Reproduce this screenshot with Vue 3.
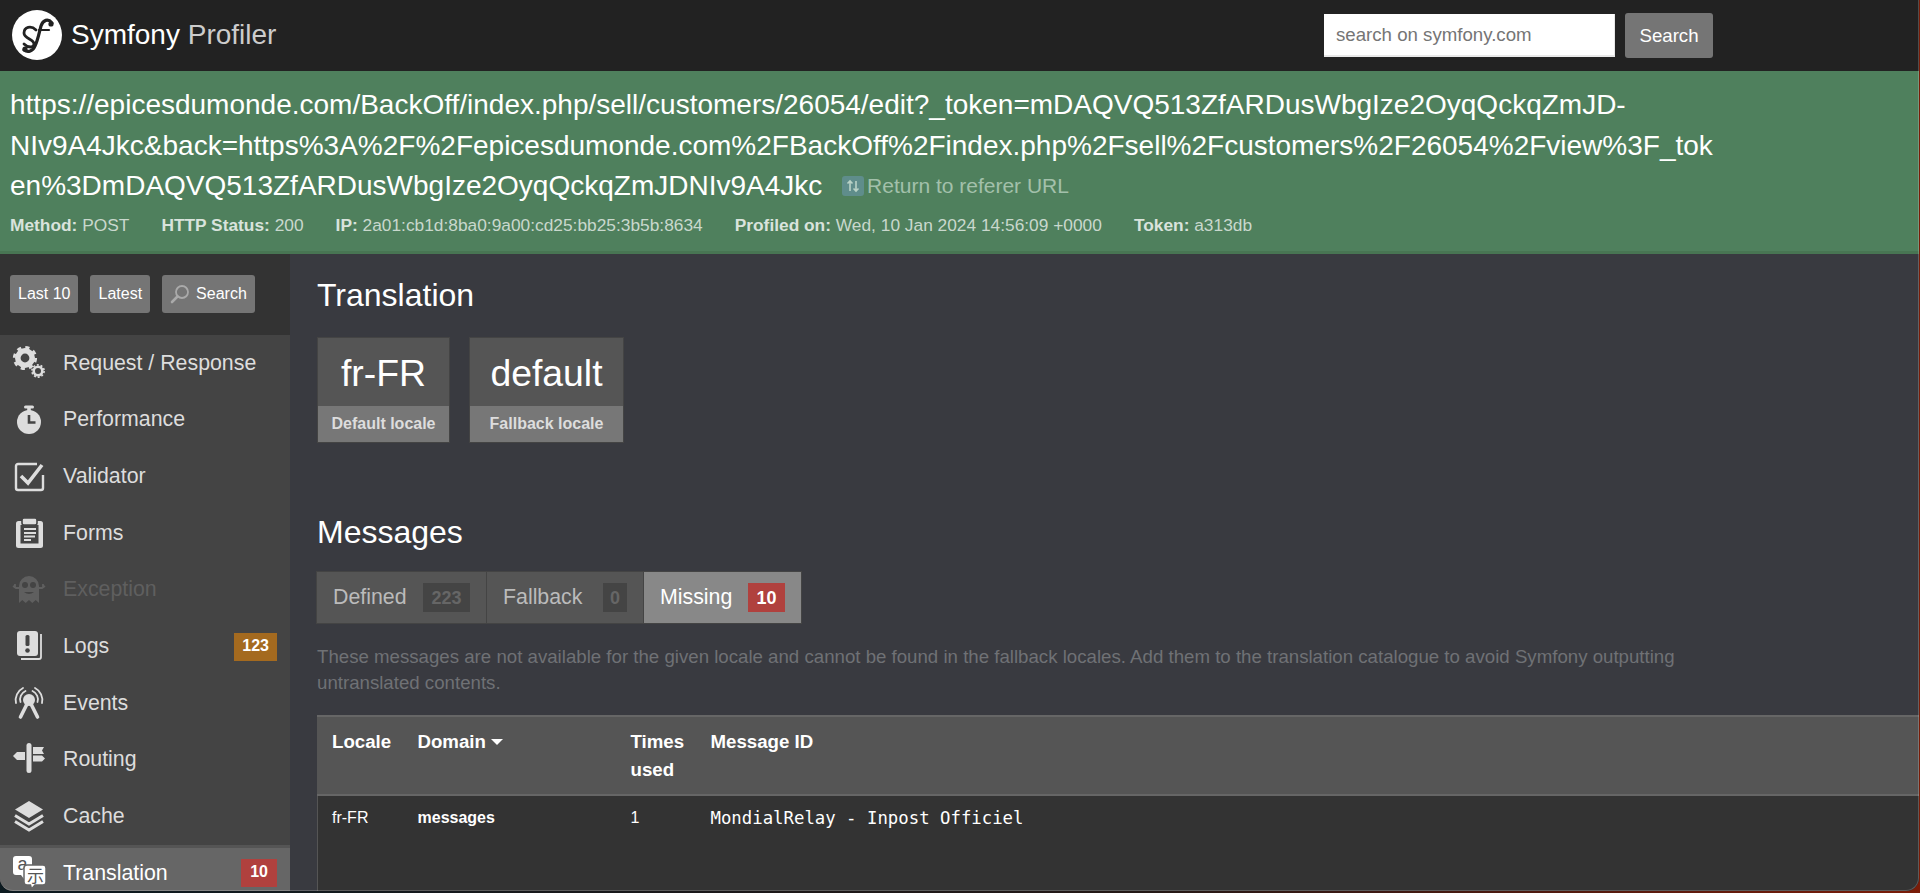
<script setup>
const meta = [
  ['Method:', 'POST'],
  ['HTTP Status:', '200'],
  ['IP:', '2a01:cb1d:8ba0:9a00:cd25:bb25:3b5b:8634'],
  ['Profiled on:', 'Wed, 10 Jan 2024 14:56:09 +0000'],
  ['Token:', 'a313db'],
]
const nav = [
  { id: 'gears', label: 'Request / Response' },
  { id: 'timer', label: 'Performance' },
  { id: 'check', label: 'Validator' },
  { id: 'forms', label: 'Forms' },
  { id: 'ghost', label: 'Exception', disabled: true },
  { id: 'logs', label: 'Logs', badge: '123', tone: 'warn' },
  { id: 'events', label: 'Events' },
  { id: 'routing', label: 'Routing' },
  { id: 'cache', label: 'Cache' },
  { id: 'trans', label: 'Translation', badge: '10', tone: 'err', active: true },
]
</script>

<template>
  <div class="window">
    <header class="top">
      <div class="brand">
        <svg class="logo" viewBox="0 0 50 50" width="50" height="50">
          <circle cx="25" cy="25" r="25" fill="#fff" />
          <g fill="none" stroke="#222" stroke-linecap="round">
            <path d="M40 13C36 8 31 10 29 16C27 23 26 30 23 36C21 41 16 43 12 40" stroke-width="3.200" />
            <path d="M24 20C19 15 12 17 12 23C12 29 22 29 22 34C22 38 16 38 12 34" stroke-width="2.800" />
            <path d="M27 20H37" stroke-width="2.200" />
          </g>
          <circle cx="39" cy="14" r="2.600" fill="#222" />
          <circle cx="13" cy="39" r="2.600" fill="#222" />
        </svg>
        <span class="name">Symfony <span class="muted">Profiler</span></span>
      </div>
      <form class="site-search" @submit.prevent>
        <input type="search" placeholder="search on symfony.com" />
        <button class="btn big" type="submit">Search</button>
      </form>
    </header>

    <section class="summary">
      <div class="url">
        https://epicesdumonde.com/BackOff/index.php/sell/customers/26054/edit?_token=mDAQVQ513ZfARDusWbgIze2OyqQckqZmJD-NIv9A4Jkc&amp;back=https%3A%2F%2Fepicesdumonde.com%2FBackOff%2Findex.php%2Fsell%2Fcustomers%2F26054%2Fview%3F_token%3DmDAQVQ513ZfARDusWbgIze2OyqQckqZmJDNIv9A4Jkc
        <a class="return">
          <svg viewBox="0 0 22 20" width="22" height="20">
            <rect width="22" height="20" rx="3" fill="#5f8d8b" />
            <path d="M8 5v10M5.500 7.500 8 5l2.500 2.500M14 15V5M11.500 12.500 14 15l2.500-2.500" fill="none" stroke="#b9d2c6" stroke-width="1.600" />
          </svg>
          Return to referer URL
        </a>
      </div>
      <dl class="meta">
        <div v-for="m in meta" :key="m[0]"><b>{{ m[0] }}</b> {{ m[1] }}</div>
      </dl>
    </section>

    <div class="body">
      <aside class="side">
        <div class="tools">
          <button class="btn">Last 10</button>
          <button class="btn">Latest</button>
          <button class="btn with-icon">
            <svg viewBox="0 0 20 20" width="20" height="20">
              <circle cx="12" cy="8" r="6" fill="none" stroke="#aaa" stroke-width="1.800" />
              <path d="M7.500 12.500 2 18" stroke="#aaa" stroke-width="2.600" stroke-linecap="round" />
            </svg>
            Search
          </button>
        </div>
        <nav class="nav">
          <a v-for="n in nav" :key="n.id" class="item" :class="{ disabled: n.disabled, active: n.active }">
            <svg class="ico" viewBox="0 0 34 34" width="34" height="34">
              <template v-if="n.id === 'gears'">
                <g fill="none" stroke="currentColor">
                  <circle cx="13" cy="12" r="7.200" stroke-width="5.600" />
                  <circle cx="13" cy="12" r="10.700" stroke-width="2.800" stroke-dasharray="4.200 4.200" />
                  <circle cx="26" cy="25" r="4.300" stroke-width="2.600" />
                  <circle cx="26" cy="25" r="6.100" stroke-width="1.600" stroke-dasharray="2 1.830" />
                </g>
              </template>
              <template v-else-if="n.id === 'timer'">
                <circle cx="17" cy="19" r="12" fill="currentColor" />
                <rect x="12" y="2.500" width="10" height="3" rx="1.500" fill="currentColor" />
                <rect x="15.200" y="5" width="3.600" height="4" fill="currentColor" />
                <path d="M17 12v7.500h6.500" fill="none" stroke="#444" stroke-width="2.600" />
              </template>
              <template v-else-if="n.id === 'check'">
                <path d="M25 4H6a2 2 0 0 0-2 2v22a2 2 0 0 0 2 2h23a2 2 0 0 0 2-2V15" fill="none" stroke="currentColor" stroke-width="2.400" />
                <path d="M9 16l7 7L30 5" fill="none" stroke="currentColor" stroke-width="3.600" />
              </template>
              <template v-else-if="n.id === 'forms'">
                <rect x="4" y="5" width="27" height="27" rx="2.500" fill="currentColor" />
                <rect x="8.500" y="9" width="18" height="18.500" fill="#444" />
                <path d="M12 13h12M12 17h12M12 20.500h11M12 24h7" stroke="currentColor" stroke-width="2" />
                <rect x="10" y="2" width="15" height="7" rx="2" fill="currentColor" stroke="#444" stroke-width="1.600" />
              </template>
              <template v-else-if="n.id === 'ghost'">
                <path d="M7 30V13a10 10 0 0 1 20 0v17l-3.300-3-3.400 3-3.300-3-3.300 3-3.400-3z" fill="currentColor" />
                <path d="M1 13l3 2h4M33 13l-3 2h-4M3 11v4M31 11v4" stroke="currentColor" stroke-width="1.800" fill="none" />
                <circle cx="13" cy="12" r="3" fill="#444" /><circle cx="21" cy="12" r="3" fill="#444" />
                <path d="M12 19q5 4 10 0z" fill="#444" />
              </template>
              <template v-else-if="n.id === 'logs'">
                <path d="M29 4v23a2 2 0 0 1-2 2H9" fill="none" stroke="currentColor" stroke-width="1.800" />
                <rect x="5" y="1" width="21" height="25" rx="3" fill="currentColor" />
                <rect x="13.500" y="5" width="4" height="11" rx="1.500" fill="#444" />
                <circle cx="15.500" cy="20.500" r="2.300" fill="#444" />
              </template>
              <template v-else-if="n.id === 'events'">
                <circle cx="17" cy="14" r="6" fill="currentColor" />
                <path d="M15 18 8.500 31M19 18l6.500 13" stroke="currentColor" stroke-width="3.600" stroke-linecap="round" />
                <g fill="none" stroke="currentColor" stroke-width="1.800" stroke-linecap="round">
                  <path d="M8.500 16a9 9 0 0 1 5-11M25.500 16a9 9 0 0 0-5-11" />
                  <path d="M4 17a13.500 13.500 0 0 1 7-15M30 17a13.500 13.500 0 0 0-7-15" />
                </g>
              </template>
              <template v-else-if="n.id === 'routing'">
                <rect x="14.500" y="0" width="5" height="30" rx="2.500" fill="currentColor" />
                <path d="M13 9H5L1 13l4 4h8zM21 4h11l-2 3.500 2 3.500H21zM21 12.500h9l3 3-3 3h-9z" fill="currentColor" />
              </template>
              <template v-else-if="n.id === 'cache'">
                <path d="M17 1 31 9.500 17 18 3 9.500z" fill="currentColor" />
                <path d="M3 15.500l14 8.500 14-8.500M3 21.500 17 30l14-8.500" fill="none" stroke="currentColor" stroke-width="3" />
              </template>
              <template v-else>
                <path d="M4 0h13a3 3 0 0 1 3 3v13a3 3 0 0 1-3 3h-3l-2 4-3-4H4a3 3 0 0 1-3-3V3a3 3 0 0 1 3-3z" fill="#fff" />
                <text x="5.500" y="14" class="gl a">a</text>
                <path d="M15 9h16a3 3 0 0 1 3 3v14a3 3 0 0 1-3 3h-8l-3.500 4-1-4H15a3 3 0 0 1-3-3V12a3 3 0 0 1 3-3z" fill="#fff" stroke="#666" stroke-width="1.500" />
                <text x="15" y="26" class="gl z">示</text>
              </template>
            </svg>
            <span class="label">{{ n.label }}</span>
            <span v-if="n.badge" class="badge" :class="n.tone">{{ n.badge }}</span>
          </a>
        </nav>
      </aside>

      <main class="main">
        <h2>Translation</h2>
        <div class="metrics">
          <div class="metric">
            <span class="value">fr-FR</span>
            <span class="cap">Default locale</span>
          </div>
          <div class="metric">
            <span class="value">default</span>
            <span class="cap">Fallback locale</span>
          </div>
        </div>

        <h2 class="second">Messages</h2>
        <div class="tabs">
          <div class="tab">Defined <span class="count">223</span></div>
          <div class="tab">Fallback <span class="count">0</span></div>
          <div class="tab on">Missing <span class="count err">10</span></div>
        </div>
        <p class="help">These messages are not available for the given locale and cannot be found in the fallback locales. Add them to the translation catalogue to avoid Symfony outputting untranslated contents.</p>

        <table class="tbl">
          <colgroup>
            <col class="c1" /><col class="c2" /><col class="c3" /><col />
          </colgroup>
          <thead>
            <tr>
              <th>Locale</th>
              <th>Domain <i class="caret"></i></th>
              <th>Times used</th>
              <th>Message ID</th>
            </tr>
          </thead>
          <tbody>
            <tr>
              <td>fr-FR</td>
              <td><strong>messages</strong></td>
              <td>1</td>
              <td class="mono">MondialRelay - Inpost Officiel</td>
            </tr>
          </tbody>
        </table>
      </main>
    </div>
  </div>
</template>

<style>
html, body {
  margin: 0;
  height: 893px;
  overflow: hidden;
  background: linear-gradient(90deg, #0c1a20 0%, #241816 60%, #7a1c08 100%);
}
</style>

<style scoped>
.window {
  position: relative;
  height: 891px;
  width: 1919px;
  display: flex;
  flex-direction: column;
  overflow: hidden;
  border-radius: 0 0 13px 13px;
  background: #393a40;
  color: #fff;
  font-family: "Liberation Sans", Arial, sans-serif;
}
.window::after {
  content: "";
  position: absolute;
  inset: 0;
  border: 1px solid rgba(255, 255, 255, .2);
  border-top: 0;
  border-left: 0;
  border-radius: 0 0 13px 13px;
  pointer-events: none;
}

.top {
  height: 71px;
  flex: none;
  display: flex;
  align-items: center;
  justify-content: space-between;
  background: #222;
  padding: 0 206px 0 12px;
}
.brand { display: flex; align-items: center; gap: 9px; margin-top: -2px; }
.logo { display: block; }
.name { font-size: 28px; }
.muted { color: #ccc; }
.site-search { display: flex; align-items: center; gap: 10px; }
.site-search input {
  width: 291px;
  height: 43px;
  box-sizing: border-box;
  border: 1px solid #e8e8e8;
  border-width: 0 1px 2px 0;
  background: #fff;
  padding: 0 12px;
  font: 18.670px "Liberation Sans", Arial, sans-serif;
  border-radius: 0;
  outline: 0;
}
.site-search input::placeholder { color: #757575; opacity: 1; }

.btn {
  display: inline-flex;
  align-items: center;
  height: 38px;
  box-sizing: border-box;
  padding: 0 8px;
  border: 0;
  border-radius: 3px;
  background: #757575;
  color: #fff;
  font: 16px "Liberation Sans", Arial, sans-serif;
}
.btn.big { height: 45px; width: 88px; justify-content: center; font-size: 18.670px; padding: 0; }
.btn.with-icon { gap: 6px; }

.summary {
  flex: none;
  height: 183px;
  box-sizing: border-box;
  background: #4f805d;
  border-bottom: 3px solid #487553;
  padding: 14px 0 0 10px;
}
.url {
  width: 1712px;
  font-size: 28px;
  line-height: 40.500px;
  overflow-wrap: anywhere;
}
.return {
  display: inline-flex;
  align-items: center;
  gap: 3px;
  margin-left: 12px;
  font-size: 21px;
  line-height: 30px;
  color: #a3c0ab;
  vertical-align: -1px;
}
.meta {
  display: flex;
  gap: 32px;
  margin: 3px 0 0;
  font-size: 17.330px;
  line-height: 30px;
  color: #c9d8cd;
}
.meta b { color: #d9e3dc; }

.body { flex: 1; min-height: 0; display: flex; }
.side { width: 290px; flex: none; background: #444; display: flex; flex-direction: column; overflow: hidden; }
.tools {
  height: 81px;
  flex: none;
  box-sizing: border-box;
  background: #333;
  display: flex;
  align-items: flex-start;
  gap: 12px;
  padding: 21px 9px 0 10px;
}
.nav { flex: none; }
.item {
  height: 56.670px;
  box-sizing: border-box;
  display: flex;
  align-items: center;
  padding-right: 13px;
  color: #ddd;
  font-size: 21.330px;
}
.ico { margin: 0 5px 0 12px; flex: none; color: #ddd; overflow: visible; }
.label { margin-left: 12px; flex: 1; }
.item.disabled, .item.disabled .ico { color: #5f5f5f; }
.item.active {
  background: #666;
  border-top: 3px solid #555;
  padding-bottom: 3px;
  color: #fff;
}
.badge {
  height: 28px;
  line-height: 26px;
  padding: 0 8px;
  font-size: 16px;
  font-weight: 700;
  color: #fff;
}
.badge.warn { background: #a46a1f; }
.badge.err { background: #b0413e; padding: 0 9px; }
.gl { font-family: "Liberation Sans", "Noto Sans CJK SC", sans-serif; fill: #555; }
.gl.a { font-size: 18px; }
.gl.z { font-family: "Noto Sans CJK SC", sans-serif; font-size: 17px; }

.main { flex: 1; min-width: 0; padding: 21px 0 0 27px; overflow: hidden; }
h2 { margin: 0; font-size: 32px; line-height: 40px; font-weight: 400; }
.second { margin-top: 69px; }
.metrics { display: flex; gap: 19px; margin-top: 22px; }
.metric {
  display: flex;
  flex-direction: column;
  width: 133px;
  border: 1px solid #444;
  box-sizing: border-box;
  text-align: center;
}
.metric + .metric { width: 155px; }
.value { height: 68px; line-height: 70px; background: #555; font-size: 37.330px; }
.cap { height: 36px; line-height: 36px; background: #777; color: #ddd; font-size: 16px; font-weight: 700; }

.tabs { display: flex; margin-top: 19px; margin-left: -1px; }
.tab {
  height: 53px;
  box-sizing: border-box;
  display: flex;
  align-items: center;
  justify-content: space-between;
  padding: 0 16px 0 16px;
  background: #555;
  border: 1px solid #444;
  border-right: 0;
  color: #bbb;
  font-size: 21.330px;
  width: 170px;
}
.tab + .tab { width: 157px; }
.tab.on { width: 159px; background: #888; color: #fff; padding-right: 16px; border-right: 1px solid #444; }
.count {
  height: 29px;
  line-height: 30px;
  padding: 0 7px;
  background: #444;
  color: #666;
  font-size: 18px;
  font-weight: 700;
}
.tab:first-child .count { width: 47px; box-sizing: border-box; text-align: center; }
.count.err { background: #b0413e; color: #fff; width: 37px; box-sizing: border-box; text-align: center; padding: 0; }
.help {
  margin: 20px 0 0;
  width: 1380px;
  font-size: 18.670px;
  line-height: 26px;
  color: #6f7175;
}

.tbl {
  width: 100%;
  margin-top: 19px;
  border-collapse: collapse;
  table-layout: fixed;
  background: #333;
  border-left: 1px solid #555;
}
.c1 { width: 86px; }
.c2 { width: 213px; }
.c3 { width: 80px; }
th {
  background: #555;
  border-top: 2px solid #666;
  border-bottom: 2px solid #666;
  padding: 11px 14px 10px;
  font-size: 18.670px;
  line-height: 28px;
  text-align: left;
  vertical-align: top;
  height: 56px;
}
th:nth-child(3), td:nth-child(3) { padding-right: 0; }
td {
  padding: 8px 14px 60px;
  font-size: 16px;
  line-height: 28px;
  vertical-align: top;
}
td:first-child, th:first-child, td:nth-child(2), th:nth-child(2) { padding-right: 0; }
.mono { font-family: "DejaVu Sans Mono", "Liberation Mono", monospace; font-size: 17.330px; }
.caret {
  display: inline-block;
  border: 6px solid transparent;
  border-top-color: #fff;
  border-bottom: 0;
  vertical-align: middle;
  margin: 0 0 2px 0;
}
</style>
